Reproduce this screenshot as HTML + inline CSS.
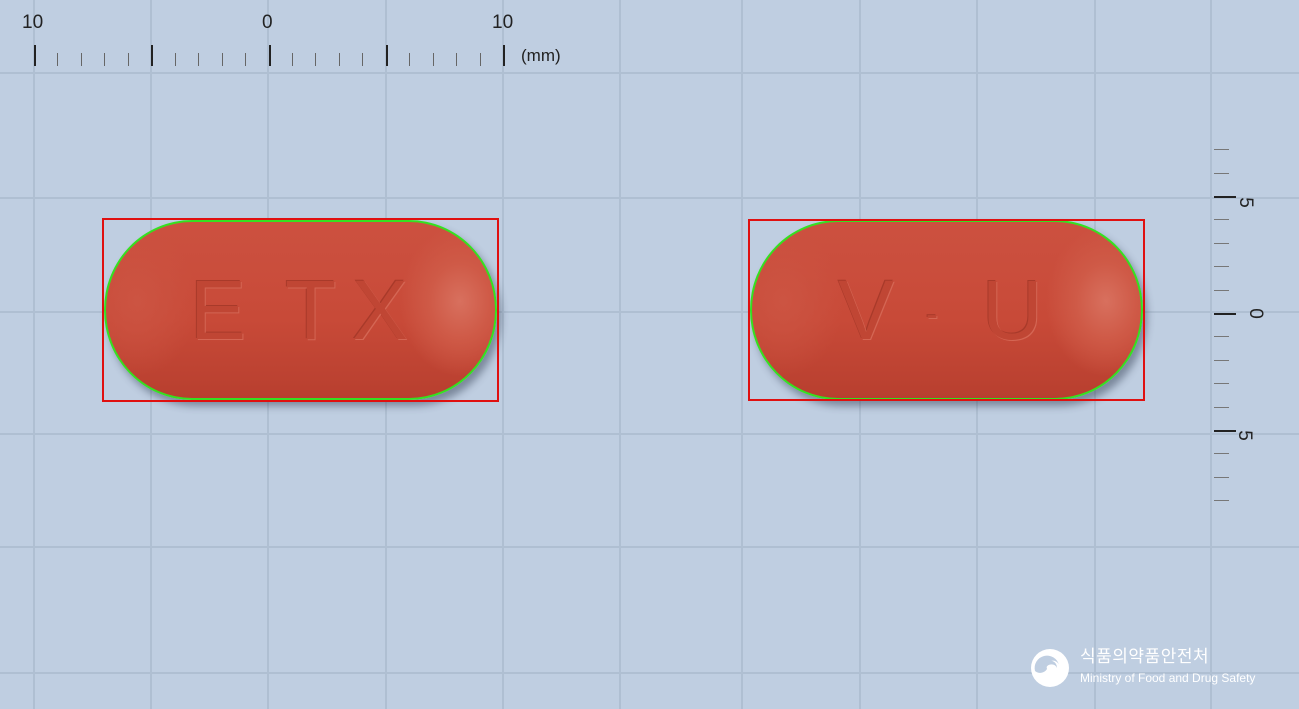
<!DOCTYPE html>
<html><head><meta charset="utf-8"><style>
html,body{margin:0;padding:0;}
body{width:1299px;height:709px;overflow:hidden;position:relative;background:#bfcee1;font-family:"Liberation Sans","Noto Sans CJK KR",sans-serif;}
.v{position:absolute;top:0;width:2px;height:709px;background:#afbfd2;}
.h{position:absolute;left:0;height:2px;width:1299px;background:#afbfd2;}
.t{position:absolute;background:#222;}
.lab{position:absolute;font-size:19px;color:#222;line-height:1;}
.box{position:absolute;border:2px solid #e01010;box-sizing:border-box;}
.pill{position:absolute;border-radius:88px/90px;background:radial-gradient(60px 75px at 91% 45%,#d8705e 0,#cf5a47 50%,rgba(204,81,64,0) 100%),radial-gradient(60px 75px at 8% 45%,#cc5442 0,rgba(204,81,64,0) 100%),linear-gradient(180deg,#cc5140 0%,#c84a38 55%,#b83f2f 100%);box-shadow:4px 6px 8px rgba(40,50,70,.45);border:2px solid #35e020;box-sizing:border-box;}
.eng{position:absolute;color:#c04634;font-size:84px;line-height:1;text-shadow:1px 1px 0 #d46654,-1px -1px 0 #a83a2a;}
</style></head><body>
<div class="v" style="left:33px"></div><div class="v" style="left:150px"></div><div class="v" style="left:267px"></div><div class="v" style="left:385px"></div><div class="v" style="left:502px"></div><div class="v" style="left:619px"></div><div class="v" style="left:741px"></div><div class="v" style="left:859px"></div><div class="v" style="left:976px"></div><div class="v" style="left:1094px"></div><div class="v" style="left:1210px"></div>
<div class="h" style="top:72px"></div><div class="h" style="top:197px"></div><div class="h" style="top:311px"></div><div class="h" style="top:433px"></div><div class="h" style="top:546px"></div><div class="h" style="top:672px"></div>

<div class="lab" style="left:22px;top:13px">10</div>
<div class="lab" style="left:262px;top:13px">0</div>
<div class="lab" style="left:492px;top:13px">10</div>
<div class="lab" style="left:521px;top:47px;font-size:17px">(mm)</div>
<div id="ticks"></div>

<div class="lab" style="left:1240px;top:193px;transform:rotate(90deg)">5</div>
<div class="lab" style="left:1250px;top:304px;transform:rotate(90deg)">0</div>
<div class="lab" style="left:1239px;top:426px;transform:rotate(90deg)">5</div>

<div class="pill" style="left:104px;top:220px;width:393px;height:180px"></div>
<div class="eng" style="left:190px;top:268px">E</div>
<div class="eng" style="left:285px;top:268px">T</div>
<div class="eng" style="left:352px;top:268px">X</div>
<div class="box" style="left:102px;top:218px;width:397px;height:184px"></div>

<div class="pill" style="left:750px;top:220px;width:393px;height:180px"></div>
<div class="eng" style="left:838px;top:268px">V</div>
<div class="eng" style="left:926px;top:296px;font-size:36px">-</div>
<div class="eng" style="left:982px;top:268px">U</div>
<div class="box" style="left:748px;top:219px;width:397px;height:182px"></div>

<svg style="position:absolute;left:1029px;top:647px" width="42" height="42" viewBox="0 0 42 42">
<circle cx="21" cy="21" r="19" fill="#fff"/>
<path d="M6 24 A12 12 0 0 1 30 18 A6 6 0 0 0 18 22 A8 8 0 0 1 6 24Z" fill="#bfcee1"/>
<path d="M15 17 A7 7 0 0 1 28 21 A6 6 0 0 0 17 21Z" fill="#bfcee1"/>
</svg>
<div style="position:absolute;left:1080px;top:647px;color:#fff;font-size:17px;line-height:20px;letter-spacing:0.5px">식품의약품안전처</div>
<div style="position:absolute;left:1080px;top:671px;color:#fff;font-size:12px;line-height:14px">Ministry of Food and Drug Safety</div>

<script>
var c=document.getElementById('ticks'),h='';
for(var i=0;i<=20;i++){var x=34+i*23.45,maj=i%5==0;
h+='<div class="t" style="left:'+Math.round(x)+'px;top:'+(maj?45:53)+'px;width:'+(maj?2:1)+'px;height:'+(maj?21:13)+'px;'+(maj?'':'background:#666')+'"></div>';}
for(var j=-7;j<=8;j++){var y=313+j*23.4,m=j%5==0;
h+='<div class="t" style="left:1214px;top:'+Math.round(y)+'px;width:'+(m?22:15)+'px;height:'+(m?2:1)+'px;'+(m?'':'background:#777')+'"></div>';}
c.innerHTML=h;
</script>
</body></html>
